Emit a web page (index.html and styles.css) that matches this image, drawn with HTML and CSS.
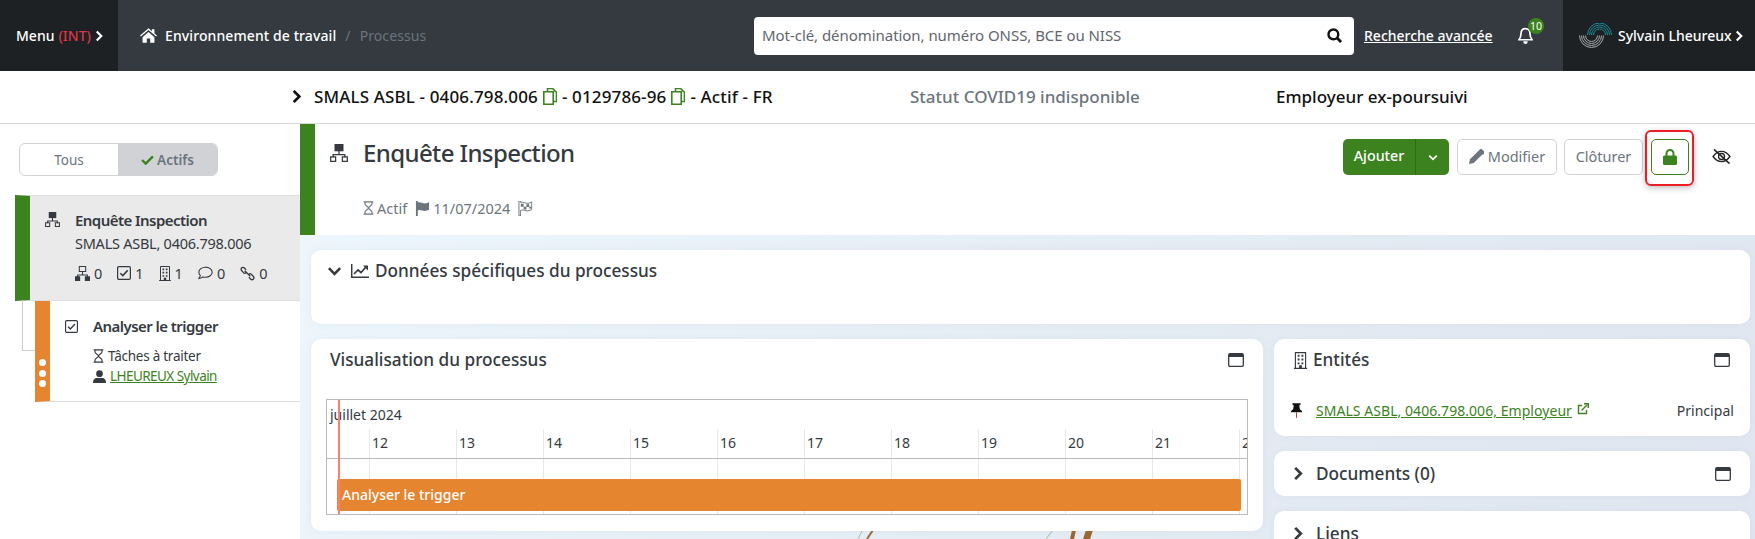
FILE: index.html
```html
<!DOCTYPE html>
<html lang="fr">
<head>
<meta charset="utf-8">
<title>Processus</title>
<link rel="stylesheet" href="styles.css">
</head>
<body>
<svg class="defs" width="0" height="0" aria-hidden="true">
  <symbol id="i-net" viewBox="0 0 16 16"><path d="M4 0h8v6.500H4z" fill="currentColor"/><path d="M8 6v3.500M2.800 12V9.500h10.400V12" fill="none" stroke="currentColor" stroke-width="1.100"/><path d="M.6 11.400h4.400v4H.6zM11 11.400h4.400v4H11z" fill="none" stroke="currentColor" stroke-width="1.100"/></symbol>
  <symbol id="i-net2" viewBox="0 0 16 16"><path d="M4.600.6h6.800v5.300H4.600z" fill="none" stroke="currentColor" stroke-width="1.100"/><path d="M8 6v3.500M2.800 12V9.500h10.400V12" fill="none" stroke="currentColor" stroke-width="1.100"/><path d="M0 11h5.500v5H0zM10.500 11H16v5h-5.500z" fill="currentColor"/></symbol>
  <symbol id="i-check" viewBox="0 0 16 16"><rect x=".7" y=".7" width="14.600" height="14.600" rx="1.500" fill="none" stroke="currentColor" stroke-width="1.400"/><path d="M3.800 8.200l2.800 2.800 5.600-6" fill="none" stroke="currentColor" stroke-width="1.700"/></symbol>
  <symbol id="i-build" viewBox="0 0 14 18"><path d="M1.600.6h10.800v16.800H1.600zM0 17.400h14" fill="none" stroke="currentColor" stroke-width="1.200"/><path d="M4 3h2v2H4zM8 3h2v2H8zM4 7h2v2H4zM8 7h2v2H8zM4 11h2v2H4zM8 11h2v2H8zM5.500 14h3v3.400h-3z" fill="currentColor"/></symbol>
  <symbol id="i-chat" viewBox="0 0 18 16"><path d="M9 1C4.600 1 1 3.600 1 7c0 1.500.7 2.800 1.800 3.800C2.500 12.300 1.500 13.800 1 14.700c1.800-.1 3.600-1 4.700-2 1 .3 2.100.4 3.300.4 4.400 0 8-2.700 8-6.100S13.400 1 9 1z" fill="none" stroke="currentColor" stroke-width="1.300"/></symbol>
  <symbol id="i-link" viewBox="0 0 16 16"><path d="M6.500 4.200L4.700 2.100a2 2 0 0 0-3 2.700l2 2.300a2 2 0 0 0 2.700.2M9.500 11.800l1.800 2.100a2 2 0 0 0 3-2.700l-2-2.300a2 2 0 0 0-2.700-.2M5 5l6 6" fill="none" stroke="currentColor" stroke-width="1.400"/></symbol>
  <symbol id="i-hour" viewBox="0 0 12 16"><path d="M.5 1h11M.5 15h11M2 1v2.500c0 2 4 3 4 4.500s-4 2.500-4 4.500V15M10 1v2.500c0 2-4 3-4 4.500s4 2.500 4 4.500V15" fill="none" stroke="currentColor" stroke-width="1.300"/></symbol>
  <symbol id="i-win" viewBox="0 0 16 14"><rect x=".7" y=".7" width="14.600" height="12.600" rx="1.300" fill="none" stroke="currentColor" stroke-width="1.300"/><path d="M1 1h14v3H1z" fill="currentColor"/></symbol>
  <symbol id="i-chev" viewBox="0 0 10 16"><path d="M2 2l6 6-6 6" fill="none" stroke="currentColor" stroke-width="2.900"/></symbol>
  <symbol id="i-down" viewBox="0 0 16 10"><path d="M2 2l6 6 6-6" fill="none" stroke="currentColor" stroke-width="2.800"/></symbol>
  <symbol id="i-copy" viewBox="0 0 14 17"><path d="M4.500 3.500v-3h5l4 4v9h-3M.8 3.800h9.400v12.400H.8z" fill="none" stroke="currentColor" stroke-width="1.600"/></symbol>
</svg>

<header class="topbar">
  <div class="menu-block">Menu <span class="int">(INT)</span><svg class="chev-s"><use href="#i-chev"/></svg></div>
  <nav class="crumbs">
    <svg class="home" viewBox="0 0 20 17"><path d="M10 0L0 8.500l1 1.200L10 2l9 7.700 1-1.200-3-2.500V1h-3v2.500zM3 10.500V17h5v-5h4v5h5v-6.500L10 4.500z" fill="currentColor"/></svg>
    <span class="crumb-main">Environnement de travail</span>
    <span class="crumb-sep">/</span>
    <span class="crumb-off">Processus</span>
  </nav>
  <div class="search">
    <span class="search-ph">Mot-clé, dénomination, numéro ONSS, BCE ou NISS</span>
    <svg class="search-i" viewBox="0 0 16 16"><circle cx="6.800" cy="6.800" r="5.200" fill="none" stroke="currentColor" stroke-width="2.600"/><path d="M10.500 10.500L15 15" stroke="currentColor" stroke-width="3"/></svg>
  </div>
  <a class="adv">Recherche avancée</a>
  <div class="bell">
    <svg viewBox="0 0 14 16"><path d="M7 1.500c-2.800 0-4.200 2-4.200 4.500 0 3-.8 4.500-2 6h12.400c-1.200-1.500-2-3-2-6 0-2.500-1.400-4.500-4.200-4.500z" fill="none" stroke="currentColor" stroke-width="1.600"/><path d="M5 13.500h4v.5a2 2 0 0 1-4 0z" fill="currentColor"/></svg>
    <span class="badge">10</span>
  </div>
  <div class="user">
    <svg class="logo" viewBox="0 0 33 25">
      <g fill="none" stroke-width="1">
        <g stroke="#1b8a94"><path d="M8.500 12a12 12 0 0 1 24 0"/><path d="M10.500 12a10 10 0 0 1 20 0"/><path d="M12.500 12a8 8 0 0 1 16 0"/><path d="M14.500 12a6 6 0 0 1 12 0"/></g>
        <g stroke="#a7abaf"><path d="M.5 12.500a12 12 0 0 0 24 0"/><path d="M2.500 12.500a10 10 0 0 0 20 0"/><path d="M4.500 12.500a8 8 0 0 0 16 0"/><path d="M6.500 12.500a6 6 0 0 0 12 0"/></g>
      </g>
    </svg>
    <span>Sylvain Lheureux</span><svg class="chev-s"><use href="#i-chev"/></svg>
  </div>
</header>

<div class="subbar">
  <div class="sub-id">
    <svg class="sub-chev"><use href="#i-chev"/></svg>
    <span>SMALS ASBL - 0406.798.006</span><svg class="copy"><use href="#i-copy"/></svg>
    <span>- 0129786-96</span><svg class="copy"><use href="#i-copy"/></svg>
    <span>- Actif - FR</span>
  </div>
  <div class="sub-covid">Statut COVID19 indisponible</div>
  <div class="sub-emp">Employeur ex-poursuivi</div>
</div>

<div class="layout">
  <aside class="side">
    <div class="toggle">
      <div class="tg tg-off">Tous</div>
      <div class="tg tg-on"><svg class="tick" viewBox="0 0 14 11"><path d="M1 5.500l4 4 8-8" fill="none" stroke="currentColor" stroke-width="2.600"/></svg>Actifs</div>
    </div>
    <div class="item item-main">
      <svg class="it-ico"><use href="#i-net"/></svg>
      <div class="it-body">
        <div class="it-title">Enquête Inspection</div>
        <div class="it-sub">SMALS ASBL, 0406.798.006</div>
        <div class="counts">
          <span class="cnt"><svg class="c-net"><use href="#i-net2"/></svg>0</span>
          <span class="cnt"><svg class="c-chk"><use href="#i-check"/></svg>1</span>
          <span class="cnt"><svg class="c-bld"><use href="#i-build"/></svg>1</span>
          <span class="cnt"><svg class="c-cht"><use href="#i-chat"/></svg>0</span>
          <span class="cnt"><svg class="c-lnk"><use href="#i-link"/></svg>0</span>
        </div>
      </div>
    </div>
    <div class="item item-task">
      <span class="conn"></span>
      <span class="dots"><i></i><i></i><i></i></span>
      <svg class="it-ico2"><use href="#i-check"/></svg>
      <div class="it-body">
        <div class="it-title t2">Analyser le trigger</div>
        <div class="task-l"><svg class="hour"><use href="#i-hour"/></svg>Tâches à traiter</div>
        <div class="task-l task-user"><svg class="person" viewBox="0 0 14 14"><circle cx="7" cy="4" r="3.600" fill="currentColor"/><path d="M0 14c0-4 2-5.500 4-5.500h6c2 0 4 1.500 4 5.500z" fill="currentColor"/></svg><a class="lnk">LHEUREUX Sylvain</a></div>
      </div>
    </div>
  </aside>

  <main class="main">
    <section class="head">
      <div class="head-l">
        <div class="head-title"><svg class="h-ico"><use href="#i-net"/></svg><h1>Enquête Inspection</h1></div>
        <div class="meta">
          <svg class="hour"><use href="#i-hour"/></svg><span>Actif</span>
          <svg class="flag" viewBox="0 0 16 16"><path d="M1 0v16h2V10c3-1.500 5 1 8 .5 1.500-.2 3-.8 4-1.500V1c-1 .8-2.500 1.300-4 1.500C8 3 6 .5 3 1.500V0z" fill="currentColor"/></svg><span>11/07/2024</span>
          <svg class="flag" viewBox="0 0 16 16"><path d="M1 0v16h1.600V10c3-1.500 5 1 8 .5 1.500-.2 3-.8 4-1.500V1c-1 .8-2.500 1.300-4 1.500C8 3 6 .5 2.600 1.500V0z" fill="none" stroke="currentColor" stroke-width="1"/><path d="M3 3h3v3H3zM9 3.500h3v3H9zM6 6h3v3H6zM12 6h2v2h-2z" fill="currentColor"/></svg>
        </div>
      </div>
      <div class="actions">
        <div class="btn-add"><span class="add-l">Ajouter</span><span class="add-r"><svg viewBox="0 0 16 10"><use href="#i-down"/></svg></span></div>
        <div class="btn btn-mod"><svg class="pencil" viewBox="0 0 16 16"><path d="M0 16l1-5L10.500 1.500l4 4L5 15zM11.500.5c.7-.7 1.800-.7 2.500 0l2 2c.7.7.7 1.800 0 2.500l-1 1-4.500-4.500z" fill="currentColor"/></svg>Modifier</div>
        <div class="btn btn-clo">Clôturer</div>
        <div class="hl"><div class="btn-lock"><svg viewBox="0 0 14 16"><path d="M3.500 7V4.500a3.500 3.500 0 0 1 7 0V7" fill="none" stroke="currentColor" stroke-width="2"/><rect y="6.500" width="14" height="9.500" rx="1.500" fill="currentColor"/></svg></div></div>
        <svg class="eye" viewBox="0 0 20 16"><path d="M1 8c2.500-3.500 5.500-5.500 9-5.500S16.500 4.500 19 8c-2.500 3.500-5.500 5.500-9 5.500S3.500 11.500 1 8z" fill="none" stroke="currentColor" stroke-width="1.400"/><circle cx="10" cy="8" r="3.200" fill="none" stroke="currentColor" stroke-width="1.400"/><path d="M2 .5l16.500 15" stroke="currentColor" stroke-width="1.800"/></svg>
      </div>
    </section>

    <section class="content">
      <svg class="plant" viewBox="0 0 300 10">
        <path d="M8 10l4-8" stroke="#b9b4a8" stroke-width="1" fill="none"/>
        <path d="M17 10l6-9" stroke="#9a6a3a" stroke-width="2" fill="none"/>
        <path d="M196 10l6-8" stroke="#b9b4a8" stroke-width="1" fill="none"/>
        <path d="M220 10l2-9h4l-2 9zM233 10l3-9h7l-3 9z" fill="#9b6430"/>
      </svg>
      <div class="card card-data">
        <div class="card-h"><svg class="down"><use href="#i-down"/></svg><svg class="chart" viewBox="0 0 18 14"><path d="M.7 0v13.300H18" fill="none" stroke="currentColor" stroke-width="1.500"/><path d="M3 10l4-4 3 2.500 5-5.500" fill="none" stroke="currentColor" stroke-width="1.700"/><path d="M12 1.500h5v5z" fill="currentColor"/></svg><h2>Données spécifiques du processus</h2></div>
      </div>
      <div class="cols">
        <div class="card card-gantt">
          <div class="card-h between"><h2>Visualisation du processus</h2><svg class="win"><use href="#i-win"/></svg></div>
          <div class="gantt">
            <div class="g-month">juillet 2024</div>
            <div class="g-days">
              <span class="g-first"></span>
              <span class="g-d">12</span><span class="g-d">13</span><span class="g-d">14</span><span class="g-d">15</span><span class="g-d">16</span><span class="g-d">17</span><span class="g-d">18</span><span class="g-d">19</span><span class="g-d">20</span><span class="g-d">21</span><span class="g-d">2</span>
            </div>
            <div class="g-body">
              <span class="g-first"></span>
              <span class="g-c"></span><span class="g-c"></span><span class="g-c"></span><span class="g-c"></span><span class="g-c"></span><span class="g-c"></span><span class="g-c"></span><span class="g-c"></span><span class="g-c"></span><span class="g-c"></span><span class="g-c"></span>
              <div class="g-bar">Analyser le trigger</div>
            </div>
            <span class="g-today"></span>
          </div>
        </div>
        <div class="right">
          <div class="card card-ent">
            <div class="card-h between"><div class="h-left"><svg class="bld"><use href="#i-build"/></svg><h2>Entités</h2></div><svg class="win"><use href="#i-win"/></svg></div>
            <div class="ent-row">
              <svg class="pin" viewBox="0 0 12 16"><path d="M1.500 0h9v1.500L9 2.500l.7 4 2.300 2v1.500H0V8.500l2.300-2 .7-4-1.500-1z" fill="currentColor"/><path d="M6 10v6" stroke="#a33" stroke-width="1"/></svg>
              <a class="lnk">SMALS ASBL, 0406.798.006, Employeur</a>
              <svg class="ext" viewBox="0 0 12 12"><path d="M9.500 7v3.500h-8v-8H5" fill="none" stroke="currentColor" stroke-width="1.400"/><path d="M4.500 7.500L10 2M7 .7h4.300V5" fill="none" stroke="currentColor" stroke-width="1.400"/></svg>
              <span class="princ">Principal</span>
            </div>
          </div>
          <div class="card card-doc">
            <div class="card-h between"><div class="h-left"><svg class="rchev"><use href="#i-chev"/></svg><h2>Documents (0)</h2></div><svg class="win"><use href="#i-win"/></svg></div>
          </div>
          <div class="card card-lien">
            <div class="card-h"><div class="h-left"><svg class="rchev"><use href="#i-chev"/></svg><h2>Liens</h2></div></div>
          </div>
        </div>
      </div>
    </section>
  </main>
</div>
</body>
</html>
```
FILE: styles.css
```css
* { box-sizing: border-box; }
html, body { margin: 0; height: 539px; overflow: hidden; }
body { font-family: "Noto Sans", Roboto, sans-serif; color: #343a40; background: #fff; font-size: 14px; }
.defs { position: absolute; }
svg { display: block; flex: none; }
a { color: inherit; }

.topbar { height: 71px; background: #343a40; display: flex; align-items: center; color: #fff; }
.menu-block { width: 118px; height: 71px; background: #1e2124; display: flex; align-items: center; padding-left: 16px; gap: 4px; font-size: 14px; font-weight: 500; }
.int { color: #dc3545; }
.chev-s { width: 8px; height: 12px; }
.crumbs { display: flex; align-items: center; margin-left: 22px; font-size: 14px; width: 614px; letter-spacing: .1px; }
.home { width: 17px; height: 15px; margin-right: 8px; }
.crumb-main { font-weight: 500; }
.crumb-sep { color: #6c757d; margin: 0 9px; }
.crumb-off { color: #6c757d; }
.search { width: 600px; height: 38px; background: #fff; border-radius: 4px; display: flex; align-items: center; justify-content: space-between; padding: 0 12px 0 8px; color: #5f666d; font-size: 15px; letter-spacing: -.05px; }
.search-ph { margin-top: -2px; }
.search-i { width: 15px; height: 15px; color: #111; }
.adv { margin-left: 10px; width: 130px; text-decoration: underline; font-size: 14px; font-weight: 500; white-space: nowrap; }
.bell { position: relative; margin-left: 24px; width: 16px; }
.bell svg { width: 15px; height: 17px; }
.badge { position: absolute; left: 10px; top: -9px; width: 16px; height: 16px; background: #3c821e; border-radius: 50%; font-size: 10.500px; line-height: 16px; text-align: center; }
.user { margin-left: auto; width: 192px; height: 71px; background: #1e2124; display: flex; align-items: center; padding-left: 16px; gap: 3px; font-size: 14px; font-weight: 500; white-space: nowrap; }
.logo { width: 33px; height: 25px; margin-right: 3px; }

.subbar { height: 53px; border-bottom: 1px solid #d8d8d8; padding-bottom: 2px; display: flex; align-items: center; color: #111; font-size: 17px; font-weight: 500; padding-left: 291px; white-space: nowrap; }
.sub-id { display: flex; align-items: center; gap: 5px; width: 619px; letter-spacing: .14px; }
.sub-chev { width: 11px; height: 15px; margin-right: 7px; }
.copy { width: 14px; height: 17px; color: #3c821e; }
.sub-covid { color: #6c757d; width: 366px; }

.layout { display: flex; height: 415px; }
.side { width: 300px; flex: none; background: #fff; padding: 19px 0 0 15px; }
.toggle { display: flex; width: 199px; height: 33px; margin-left: 4px; margin-bottom: 19px; border: 1px solid #d0d2d6; border-radius: 6px; overflow: hidden; font-size: 13.500px; color: #6c757d; }
.tg { display: flex; align-items: center; justify-content: center; }
.tg-off { width: 98px; }
.tg-on { flex: 1; background: #d0d2d6; font-weight: 600; gap: 3px; }
.tick { width: 13px; height: 10px; color: #3c821e; }
.item { position: relative; display: flex; }
.item-main { height: 106px; background: #eaeaea; border-top: 1px solid #ddd; border-bottom: 1px solid #ddd; border-left: 15px solid #3c821e; padding: 14px 0 0 15px; }
.it-ico { width: 15px; height: 15px; margin: 2px 15px 0 0; color: #343a40; }
.it-title { font-size: 15px; font-weight: 600; line-height: 20px; letter-spacing: -.55px; }
.it-sub { font-size: 14.500px; line-height: 20px; margin-top: 3px; letter-spacing: -.25px; }
.counts { display: flex; gap: 15px; margin-top: 10px; font-size: 14.500px; line-height: 20px; }
.cnt { display: flex; align-items: center; gap: 4px; }
.c-net { width: 15px; height: 15px; }
.c-chk { width: 14px; height: 14px; }
.c-bld { width: 12px; height: 15px; }
.c-cht { width: 15px; height: 14px; }
.c-lnk { width: 15px; height: 15px; }
.item-task { height: 101px; margin-left: 20px; border-bottom: 1px solid #ddd; border-left: 15px solid #e58530; padding: 16px 0 0 15px; }
.conn { position: absolute; left: -28px; top: -1px; width: 13px; height: 51px; border-left: 1px solid #ccc; border-bottom: 1px solid #ccc; }
.dots { position: absolute; left: -11px; top: 58px; display: flex; flex-direction: column; gap: 3.500px; }
.dots i { width: 7px; height: 7px; background: #fff; border-radius: 50%; display: block; }
.it-ico2 { width: 13px; height: 13px; margin-right: 15px; margin-top: 3px; }
.t2 { line-height: 19px; }
.task-l { display: flex; align-items: center; gap: 4px; font-size: 13.500px; line-height: 20px; letter-spacing: -.25px; }
.task-user { letter-spacing: -.55px; }
.t2 + .task-l { margin-top: 10px; }
.hour { width: 11px; height: 14px; }
.person { width: 13px; height: 13px; }
.lnk { color: #3c821e; text-decoration: underline; }

.main { flex: 1; display: flex; flex-direction: column; }
.head { height: 111px; background: #fff; border-left: 15px solid #3c821e; display: flex; justify-content: space-between; padding-left: 15px; }
.head-title { display: flex; align-items: center; margin-top: 11px; }
.h-ico { width: 18px; height: 18px; margin-right: 15px; }
h1 { margin: 0; font-size: 24px; font-weight: 500; line-height: 36px; letter-spacing: -.6px; }
.meta { display: flex; align-items: center; margin: 27px 0 0 33px; gap: 3px; color: #6c757d; font-size: 14.500px; }
.meta .flag { width: 15px; height: 15px; margin-left: 5px; }
.actions { display: flex; align-items: flex-start; padding-top: 15px; margin-right: 24px; }
.btn-add { display: flex; height: 36px; width: 106px; background: #3c821e; color: #fff; border-radius: 5px; font-size: 14.300px; font-weight: 500; align-items: center; }
.add-l { width: 73px; height: 100%; display: flex; align-items: center; justify-content: center; border-right: 1px solid #2f6a17; padding-bottom: 3px; }
.add-r { flex: 1; display: flex; justify-content: center; }
.add-r svg { width: 10px; height: 7px; }
.btn { height: 36px; display: flex; align-items: center; justify-content: center; gap: 4px; border: 1px solid #d3d3d3; border-radius: 5px; color: #6c757d; font-size: 14.500px; padding-bottom: 3px; }
.btn-mod { width: 100px; margin-left: 8px; }
.btn-clo { width: 79px; margin-left: 7px; }
.pencil { width: 15px; height: 15px; margin-top: 2px; }
.hl { margin: -9px 0 0 2px; width: 49px; height: 56px; border: 2px solid #ee1c25; border-radius: 6px; padding: 7px 0 0 4px; box-shadow: 0 2px 6px rgba(0,0,0,.25); }
.btn-lock { width: 38px; height: 36px; border: 1px solid #3c821e; border-radius: 5px; color: #3c821e; display: flex; align-items: center; justify-content: center; }
.btn-lock svg { width: 14px; height: 16px; }
.eye { width: 19px; height: 15px; margin: 10px 0 0 18px; color: #222; }

.content { position: relative; flex: 1; padding: 15px 5px 0 11px; background: linear-gradient(120deg, #eef6fc 0%, #e6edf4 50%, #e0e6f1 100%); overflow: hidden; }
.plant { position: absolute; left: 550px; bottom: 0; width: 300px; height: 10px; }
.card { position: relative; background: #fff; border-radius: 10px; padding: 0 15px; box-shadow: 0 0 8px rgba(150,170,190,.12); }
.card-h { display: flex; align-items: center; height: 42px; gap: 5px; }
.between { justify-content: space-between; }
.h-left { display: flex; align-items: center; gap: 5px; padding-left: 4px; }
h2 { margin: 0; font-size: 17.200px; font-weight: 500; line-height: 24px; }
.card-data { height: 74px; }
.card-data .card-h { padding-left: 1px; gap: 6px; }
.down { width: 15px; height: 10px; margin-right: 3px; }
.chart { width: 18px; height: 14px; }
.win { width: 16px; height: 14px; margin-right: 4px; }
.cols { display: grid; grid-template-columns: 952px 476px; gap: 11px; margin-top: 15px; }
.card-gantt { height: 192px; padding: 0 15px; }
.card-gantt .card-h { padding-left: 4px; }
.gantt { position: relative; margin-top: 18px; height: 116px; width: 922px; border: 1px solid #bbb; overflow: hidden; font-size: 14px; }
.g-month { height: 29px; padding: 5px 3px 0; line-height: 20px; }
.g-days { display: flex; height: 30px; border-bottom: 1px solid #bbb; }
.g-days span, .g-body span { flex: none; }
.g-first { width: 42px; }
.g-d, .g-c { width: 87px; border-left: 1px solid #e8e8e8; }
.g-d { padding: 4px 0 0 2px; line-height: 20px; }
.g-body { position: relative; display: flex; height: 55px; }
.g-bar { position: absolute; left: 10px; top: 20px; width: 904px; height: 32px; background: #e58530; color: #fff; border-radius: 2px; padding-left: 5px; line-height: 31px; font-weight: 500; }
.g-today { position: absolute; left: 11px; top: 0; bottom: 0; width: 2px; background: #ff7f6e; }
.right { display: flex; flex-direction: column; gap: 15px; }
.card-ent { height: 97px; padding-right: 16px; }
.bld { width: 15px; height: 17px; }
.ent-row { display: flex; align-items: center; margin-top: 20px; font-size: 14px; padding-left: 2px; letter-spacing: .05px; }
.pin { width: 11px; height: 15px; margin-right: 14px; color: #111; }
.ext { width: 12px; height: 12px; color: #3c821e; margin: 0 0 3px 5px; }
.princ { margin-left: auto; }
.card-doc { height: 45px; }
.card-doc .card-h, .card-lien .card-h { height: 45px; }
.rchev { width: 10px; height: 15px; margin-right: 8px; }
.card-lien { height: 60px; }
```
